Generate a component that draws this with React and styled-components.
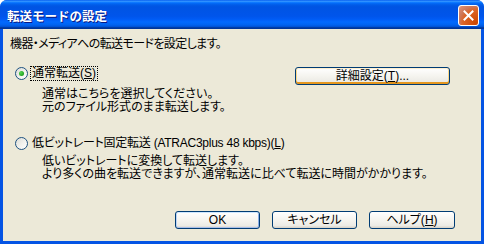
import React from "react";
import styled, { createGlobalStyle } from "styled-components";

const Global = createGlobalStyle`
  html, body { margin: 0; padding: 0; background: #ffffff; }
  body { font-family: "Liberation Sans", "Noto Sans CJK JP", sans-serif; }
`;

const FONT = `"Liberation Sans", "Noto Sans CJK JP", sans-serif`;

const Window = styled.div`
  width: 484px;
  height: 244px;
  display: flex;
  flex-direction: column;
  background: #0454e4;
  box-sizing: border-box;
  border-radius: 7px 7px 0 0;
  overflow: hidden;
`;

const TitleBar = styled.div`
  height: 29px;
  flex: none;
  display: flex;
  align-items: center;
  padding: 0 5px 0 7px;
  box-sizing: border-box;
  background: linear-gradient(
    to bottom,
    #0058ee 0%, #3593ff 4%, #288eff 6%, #127dff 8%, #036ffc 10%,
    #0262ee 14%, #0057e5 20%, #0054e3 24%, #0055eb 56%, #005bf5 66%,
    #026afe 76%, #0062ef 86%, #0052d6 92%, #0040ab 94%, #003092 100%
  );
`;

const Title = styled.div`
  flex: 1;
  color: #ffffff;
  font-family: "Noto Sans CJK JP", sans-serif;
  font-weight: 700;
  font-size: 12.5px;
  text-shadow: 1px 1px 0 #0a1883;
  padding-top: 1px;
`;

const CloseButton = styled.div`
  width: 21px;
  height: 21px;
  box-sizing: border-box;
  border: 1px solid #ffffff;
  border-radius: 3px;
  background: radial-gradient(circle at 90% 90%, #cc4600 0%, #dc6527 55%, #cd7759 70%, #dc8a6c 90%, #f0b79f 100%);
  display: flex;
  align-items: center;
  justify-content: center;
  margin-top: 1px;
`;

const Body = styled.div`
  flex: 1;
  margin: 0 3px 3px 3px;
  background: #ece9d8;
  display: flex;
  flex-direction: column;
  padding: 9px 0 0 7px;
  box-sizing: border-box;
  font-family: ${FONT};
  font-size: 12px;
  color: #000000;
  font-feature-settings: "palt";
`;

const Line = styled.div`
  height: 13px;
  line-height: 13px;
  white-space: nowrap;
  letter-spacing: ${(p) => p.$ls || 0}px;
`;

const Section = styled.div`
  display: flex;
  align-items: flex-start;
  margin-top: ${(p) => p.$top}px;
`;

const Group = styled.div`
  flex: 1;
  display: flex;
  flex-direction: column;
`;

const RadioRow = styled.label`
  display: flex;
  align-items: center;
  height: 15px;
  padding-left: 5px;
`;

const RadioCircle = styled.span`
  width: 13px;
  height: 13px;
  box-sizing: border-box;
  border-radius: 50%;
  border: 1px solid #1c5180;
  background: linear-gradient(135deg, #dcdcd6 0%, #f4f4f0 60%, #ffffff 100%);
  display: flex;
  align-items: center;
  justify-content: center;
  flex: none;
`;

const RadioDot = styled.span`
  width: 5px;
  height: 5px;
  border-radius: 50%;
  background: radial-gradient(circle at 35% 35%, #55d551 0%, #21a121 70%, #1a8a1a 100%);
`;

const RadioLabel = styled.span`
  margin-left: 2px;
  padding: 0 1px;
  height: 13px;
  line-height: 13px;
  border: 1px dotted ${(p) => (p.$focused ? "#000000" : "transparent")};
  white-space: nowrap;
  letter-spacing: ${(p) => p.$ls || 0}px;
`;

const Desc = styled.div`
  display: flex;
  flex-direction: column;
  padding-left: 32px;
  margin-top: ${(p) => p.$top}px;
`;

const U = styled.span`
  text-decoration: underline;
  text-underline-offset: 1px;
`;

const Button = styled.button`
  width: ${(p) => p.$w}px;
  height: 18px;
  padding: 0;
  box-sizing: border-box;
  border: 1px solid #003c74;
  border-radius: 3px;
  font-family: ${FONT};
  font-size: 12px;
  font-feature-settings: "palt";
  color: #000000;
  line-height: 14px;
  background: linear-gradient(to bottom, #ffffff 0%, #f5f4ef 50%, #ecebe5 85%, #d6d0c5 100%);
  box-shadow: ${(p) =>
    p.$hot
      ? "inset 0 -2px 0 #e5971f, inset 0 1px 0 #fff0cf, inset 1px 0 0 #fbd88a, inset -1px 0 0 #fbd88a"
      : p.$default
      ? "inset 0 -1px 0 #a9bfe9, inset 0 1px 0 #cee7ff, inset 1px 0 0 #bcd4f6, inset -1px 0 0 #89ade4"
      : "none"};
  flex: none;
`;

const DetailButton = styled(Button)`
  margin-top: 1px;
  margin-right: 31px;
`;

const ButtonRow = styled.div`
  display: flex;
  justify-content: flex-end;
  gap: 12px;
  padding-right: 26px;
  margin-top: 30px;
`;

export default function App() {
  return (
    <>
      <Global />
      <Window>
        <TitleBar>
          <Title>転送モードの設定</Title>
          <CloseButton>
            <svg width="11" height="11" viewBox="0 0 11 11">
              <path d="M1.5 1.5 L9.5 9.5 M9.5 1.5 L1.5 9.5" stroke="#ffffff" strokeWidth="2" strokeLinecap="square" />
            </svg>
          </CloseButton>
        </TitleBar>
        <Body>
          <Line $ls={-0.6}>機器・メディアへの転送モードを設定します。</Line>
          <Section $top={15}>
            <Group>
              <RadioRow>
                <RadioCircle>
                  <RadioDot />
                </RadioCircle>
                <RadioLabel $focused>
                  通常転送(<U>S</U>)
                </RadioLabel>
              </RadioRow>
              <Desc $top={7}>
                <Line>通常はこちらを選択してください。</Line>
                <Line>元のファイル形式のまま転送します。</Line>
              </Desc>
            </Group>
            <DetailButton $w={155} $hot>
              詳細設定(<U>T</U>)...
            </DetailButton>
          </Section>
          <Section $top={22}>
            <Group>
              <RadioRow>
                <RadioCircle />
                <RadioLabel $ls={-0.25}>
                  低ビットレート固定転送 (ATRAC3plus 48 kbps)(<U>L</U>)
                </RadioLabel>
              </RadioRow>
              <Desc $top={4}>
                <Line>低いビットレートに変換して転送します。</Line>
                <Line>より多くの曲を転送できますが、通常転送に比べて転送に時間がかかります。</Line>
              </Desc>
            </Group>
          </Section>
          <ButtonRow>
            <Button $w={85} $default>OK</Button>
            <Button $w={85}>キャンセル</Button>
            <Button $w={86}>
              ヘルプ(<U>H</U>)
            </Button>
          </ButtonRow>
        </Body>
      </Window>
    </>
  );
}
